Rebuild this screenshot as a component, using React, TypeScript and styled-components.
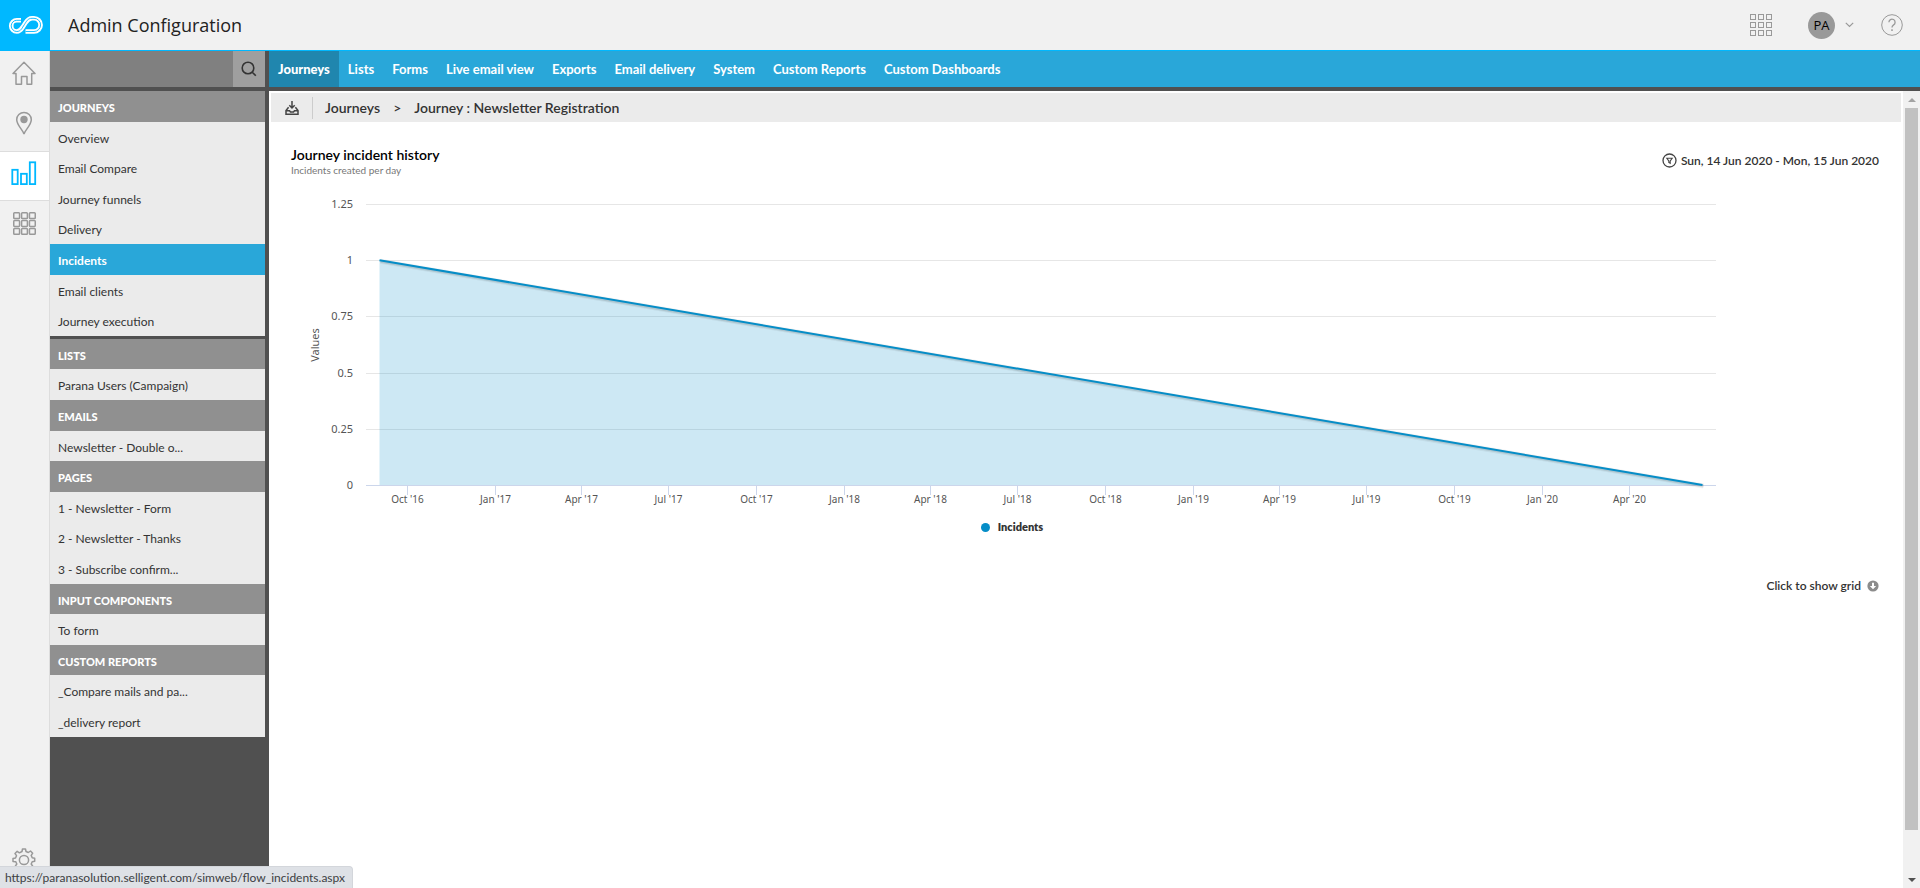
import React, { useLayoutEffect, useRef, useState } from "react";
import styled, { createGlobalStyle, css } from "styled-components";

const GlobalStyle = createGlobalStyle`
  *, *::before, *::after { box-sizing: border-box; }
  body {
    margin: 0;
    background: #fff;
    color: #333;
    font-family: Lato, Carlito, Calibri, sans-serif;
    font-size: 13px;
  }
  button, input { font: inherit; color: inherit; }
  button { border: 0; padding: 0; background: none; cursor: pointer; }
  a { color: inherit; text-decoration: none; }
  ul, ol { list-style: none; margin: 0; padding: 0; }
  h1, h2, h3, p { margin: 0; font-weight: inherit; font-size: inherit; }
  svg { display: block; }
`;

const Page = styled.div`
  display: flex;
  flex-direction: column;
  height: 100vh;
  overflow: hidden;
`;

const Header = styled.header`
  display: flex;
  flex: none;
  align-items: stretch;
  height: 51px;
  background: #f1f1f1;
`;

const LogoLink = styled.a`
  flex: none;
  width: 50px;
  background: #00b8ff;
`;

const HeaderMain = styled.div`
  display: flex;
  flex: 1;
  align-items: center;
  padding: 0 17px 0 18px;
  border-bottom: 1px solid #00b8ff;
`;

const AppTitle = styled.h1`
  flex: 1;
  font-family: "Open Sans", sans-serif;
  font-size: 18px;
  line-height: 24px;
  color: #222;
`;

const HeaderTools = styled.div`
  display: flex;
  align-items: center;
`;

const ToolButton = styled.button`
  display: flex;
  align-items: center;
  color: #999;
`;

const AccountButton = styled.button`
  display: flex;
  align-items: center;
  gap: 10px;
  margin: 0 27px 0 36px;
`;

const Avatar = styled.span`
  width: 27px;
  height: 27px;
  border-radius: 50%;
  background: #999;
  color: #000;
  font-family: "Open Sans", sans-serif;
  font-size: 13px;
  line-height: 27px;
  text-align: center;
`;

const Body = styled.div`
  display: flex;
  flex: 1;
  min-height: 0;
`;

const Rail = styled.nav`
  display: flex;
  flex: none;
  flex-direction: column;
  width: 50px;
  background: #f1f1f1;
  border-right: 1px solid #ddd;
`;

const RailLink = styled.a<{ $active?: boolean; $last?: boolean }>`
  display: flex;
  align-items: center;
  justify-content: center;
  height: 50px;
  padding: 0 1px 6px 0;
  color: #999;
  ${(p) =>
    p.$active &&
    css`
      color: #00b8ff;
      background: #fff;
      border: 1px solid #ddd;
      border-width: 1px 0;
    `}
  ${(p) => p.$last && "margin-top: auto;"}
`;

const Sidebar = styled.aside`
  flex: none;
  width: 219px;
  background: #505050;
  border-right: 4px solid #505050;
`;

const SearchForm = styled.form`
  display: flex;
  height: 36px;
  margin-bottom: 4px;
`;

const SearchInput = styled.input`
  flex: 1;
  min-width: 0;
  border: 0;
  padding: 0 8px;
  background: #808080;
  color: #fff;
  outline: 0;
`;

const SearchButton = styled.button`
  display: flex;
  align-items: center;
  justify-content: center;
  width: 32px;
  background: #9f9f9f;
  color: #333;
`;

const rowBox = css`
  padding: 9px 8px 6px;
  white-space: nowrap;
`;

const SectionTitle = styled.h2`
  ${rowBox}
  font-size: 11px;
  line-height: 1.42;
  font-weight: 900;
  color: #fff;
  background: #909090;
`;

const SectionBlock = styled.section<{ $divided?: boolean }>`
  border-bottom: ${(p) => (p.$divided ? "3px solid #505050" : "0")};
`;

const SideLink = styled.a<{ $active?: boolean }>`
  ${rowBox}
  display: block;
  font-size: 12px;
  line-height: 1.3;
  background: ${(p) => (p.$active ? "#29a7d9" : "#ebebeb")};
  color: ${(p) => (p.$active ? "#fff" : "#333")};
  font-weight: ${(p) => (p.$active ? 700 : 400)};
`;

const Main = styled.main`
  display: flex;
  flex: 1;
  flex-direction: column;
  min-width: 0;
`;

const Tabs = styled.nav`
  display: flex;
  flex: none;
  height: 40px;
  background: #29a7d9;
  border-bottom: 4px solid #505050;
`;

const Tab = styled.a<{ $active?: boolean }>`
  padding: 0 9px;
  font-size: 13px;
  line-height: 37px;
  font-weight: ${(p) => (p.$active ? 900 : 700)};
  color: #fff;
  background: ${(p) => (p.$active ? "#2086ae" : "transparent")};
`;

const Scroller = styled.div`
  display: flex;
  flex: 1;
  min-height: 0;
`;

const Content = styled.div`
  flex: 1;
  min-width: 0;
  padding: 2px;
`;

const Breadcrumb = styled.div`
  display: flex;
  align-items: center;
  height: 29px;
  background: #ebebeb;
  font-size: 14px;
  line-height: 20px;
  font-weight: 600;
`;

const ExportButton = styled.button`
  display: flex;
  align-items: center;
  height: 22px;
  padding: 0 13px 0 14px;
  border-right: 1px solid #ccc;
`;

const Trail = styled.ol`
  display: flex;
  gap: 13px;
  padding-left: 12px;
`;

const Report = styled.section`
  padding: 23px 22px 22px 20px;
`;

const ReportHead = styled.div`
  display: flex;
  align-items: center;
  justify-content: space-between;
`;

const ReportTitle = styled.h2`
  font-size: 14px;
  line-height: 19px;
  font-weight: 600;
  color: #000;
`;

const ReportSubtitle = styled.p`
  font-size: 10px;
  line-height: 12px;
  color: #777;
`;

const PeriodButton = styled.button`
  display: flex;
  align-items: center;
  gap: 4px;
  font-size: 12px;
  font-weight: 600;
  line-height: 16px;
`;

const ChartFigure = styled.figure`
  margin: 18px 146px 0 0;
`;

const ChartCanvas = styled.div`
  height: 325px;
`;

const AxisText = styled.text<{ $large?: boolean }>`
  font-family: "Noto Sans", "Lucida Grande", sans-serif;
  font-size: ${(p) => (p.$large ? 11 : 10)}px;
  fill: #555;
`;

const Legend = styled.button`
  display: flex;
  align-items: center;
  gap: 8px;
  margin: 0 auto;
  font-size: 11px;
  line-height: 16px;
  font-weight: 800;
`;

const LegendDot = styled.span`
  width: 9px;
  height: 9px;
  border-radius: 50%;
  background: #058dc7;
`;

const GridToggle = styled.button`
  display: flex;
  align-items: center;
  gap: 6px;
  margin: 43px 0 0 auto;
  font-size: 12px;
  line-height: 16px;
  font-weight: 600;
`;

const ScrollTrack = styled.div`
  display: flex;
  flex: none;
  flex-direction: column;
  align-items: center;
  width: 17px;
  background: #f1f1f1;
`;

const ScrollArrow = styled.button`
  display: flex;
  flex: none;
  align-items: center;
  justify-content: center;
  width: 17px;
  height: 17px;
`;

const ScrollThumb = styled.div`
  flex: 722;
  width: 13px;
  background: #c1c1c1;
`;

const ScrollRest = styled.div`
  flex: 41;
`;

const StatusBubble = styled.div`
  position: fixed;
  left: 0;
  bottom: 0;
  height: 22px;
  padding: 0 7px 0 5px;
  border: 1px solid #d3d6db;
  border-width: 1px 1px 0 0;
  border-radius: 0 4px 0 0;
  background: #dee1e6;
  color: #3c4043;
  font-size: 12px;
  line-height: 21px;
`;

const ribbon = "M21 20.300H16.800a5.600 5.600 0 0 0 0 11.200C21 31.500 22 28 24.300 24.700S27.500 18.300 32 18.300H34a6.600 6.600 0 0 1 0 13.200H25.500";

const LogoIcon = () => (
  <svg width="50" height="51" viewBox="0 0 50 51" fill="none" aria-hidden="true">
    <path d={ribbon} stroke="#fff" strokeWidth="4.600" />
    <path d={ribbon} stroke="#00b8ff" strokeWidth="0.900" />
  </svg>
);

const HomeIcon = () => (
  <svg width="24" height="24" viewBox="0 0 24 24" fill="none" stroke="currentColor" strokeWidth="1.500" aria-hidden="true">
    <path d="M1 12.500 12 1.200l11 11.300H19.700V23.200H15V15.500H9.500V23.200H4V12.500Z" strokeLinejoin="round" />
  </svg>
);

const PinIcon = () => (
  <svg width="18" height="24" viewBox="0 0 18 24" fill="none" stroke="currentColor" strokeWidth="1.500" aria-hidden="true">
    <path d="M9 23C8 19 1.700 14 1.700 8.700a7.300 7.300 0 0 1 14.600 0C16.300 14 10 19 9 23Z" />
    <circle cx="9" cy="8.500" r="3.700" fill="currentColor" stroke="none" />
  </svg>
);

const BarsIcon = () => (
  <svg width="26" height="24" viewBox="0 0 26 24" fill="none" stroke="currentColor" strokeWidth="1.800" aria-hidden="true">
    <rect x="1.300" y="8.800" width="5.400" height="14.300" />
    <rect x="10" y="12.800" width="5.800" height="10.300" />
    <rect x="18.800" y="1.300" width="5.400" height="21.800" />
  </svg>
);

const GridIcon = ({ size, weight, cell }: { size: number; weight: number; cell: number }) => {
  const step = (size - cell - weight) / 2;
  return (
    <svg width={size} height={size} viewBox={`0 0 ${size} ${size}`} fill="none" stroke="currentColor" strokeWidth={weight} aria-hidden="true">
      {[0, 1, 2].map((r) =>
        [0, 1, 2].map((c) => (
          <rect key={`${r}${c}`} x={weight / 2 + c * step} y={weight / 2 + r * step} width={cell} height={cell} rx={weight > 1 ? 0.8 : 0} />
        ))
      )}
    </svg>
  );
};

const GearIcon = () => (
  <svg width="24" height="24" viewBox="0 0 24 24" fill="none" stroke="currentColor" strokeWidth="1.500" strokeLinejoin="round" aria-hidden="true">
    <circle cx="12" cy="12" r="4.600" />
    <path d="M10 3.500 10.500 1h3l.5 2.500 2.300 1 2.200-1.500 2.200 2.200-1.500 2.200 1 2.300 2.500.5v3l-2.500.5-1 2.300 1.500 2.200-2.200 2.200-2.200-1.500-2.300 1-.5 2.500h-3l-.5-2.500-2.300-1-2.200 1.500-2.200-2.200 1.500-2.200-1-2.300L1 13.500v-3l2.500-.5 1-2.300-1.500-2.200 2.200-2.200 2.200 1.500Z" />
  </svg>
);

const SearchIcon = () => (
  <svg width="16" height="16" viewBox="0 0 16 16" fill="none" stroke="currentColor" strokeWidth="1.600" aria-hidden="true">
    <circle cx="7" cy="7" r="5.800" />
    <path d="m11.200 11.200 3.600 3.600" />
  </svg>
);

const ChevronIcon = () => (
  <svg width="9" height="6" viewBox="0 0 9 6" fill="none" stroke="#999" strokeWidth="1.200" aria-hidden="true">
    <path d="m.8.800 3.700 3.700L8.200.800" />
  </svg>
);

const HelpIcon = () => (
  <svg width="22" height="22" viewBox="0 0 22 22" fill="none" stroke="currentColor" aria-hidden="true">
    <circle cx="11" cy="11" r="10.300" />
    <path d="M7.900 8.300a3.100 3.100 0 1 1 4.700 2.600c-1 .7-1.600 1.200-1.600 2.700" strokeWidth="1.300" />
    <path d="M11 15.300v1.700" strokeWidth="1.500" />
  </svg>
);

const DownloadTrayIcon = () => (
  <svg width="14" height="14" viewBox="0 0 14 14" fill="none" stroke="#444" strokeWidth="1.500" aria-hidden="true">
    <path d="M7 0v7M4.300 4.300 7 7l2.700-2.700" />
    <path d="M3.600 6.200 1 9.500v3.700h12V9.500l-2.600-3.300" />
    <path d="M1 9.700h3.500l1 1.300h3l1-1.300H13" />
  </svg>
);

const FilterIcon = () => (
  <svg width="15" height="15" viewBox="0 0 15 15" fill="none" stroke="#444" strokeWidth="1.300" aria-hidden="true">
    <circle cx="7.500" cy="7.500" r="6.500" />
    <path d="M4.800 5.200h5.400L8.200 8v2.300l-1.400-.8V8Z" strokeWidth="1.100" />
  </svg>
);

const ShowGridIcon = () => (
  <svg width="12" height="12" viewBox="0 0 12 12" aria-hidden="true">
    <circle cx="6" cy="6" r="5.600" fill="#8c8c8c" />
    <path d="M5 2.800h2v3.200h2.200L6 9.300 2.800 6H5Z" fill="#fff" />
  </svg>
);

const day = 86400000;
const firstPoint = Date.UTC(2016, 8, 2);
const lastPoint = Date.UTC(2020, 5, 16, 12);
const axisTicks = ["Oct '16", "Jan '17", "Apr '17", "Jul '17", "Oct '17", "Jan '18", "Apr '18", "Jul '18", "Oct '18", "Jan '19", "Apr '19", "Jul '19", "Oct '19", "Jan '20", "Apr '20"];

function IncidentChart() {
  const host = useRef<HTMLDivElement>(null);
  const [width, setWidth] = useState(1400);

  useLayoutEffect(() => {
    const node = host.current;
    if (!node) return;
    const measure = () => setWidth(node.clientWidth);
    measure();
    const observer = new ResizeObserver(measure);
    observer.observe(node);
    return () => observer.disconnect();
  }, []);

  const left = 75;
  const right = width - 17;
  const top = 10;
  const bottom = 291;
  const pad = (right - left) * 0.01;
  const x = (t: number) =>
    left + pad + ((t - firstPoint) / (lastPoint - firstPoint)) * (right - left - 2 * pad);
  const y = (v: number) => bottom - ((bottom - top) * v) / 1.25;
  const trend = `M${x(firstPoint)} ${y(1)}L${x(lastPoint)} ${bottom}`;

  return (
    <ChartCanvas ref={host}>
      <svg width={width} height="320" role="img" aria-label="Incidents created per day">
        {[0.25, 0.5, 0.75, 1, 1.25].map((v) => (
          <line key={v} x1={left} x2={right} y1={Math.round(y(v)) + 0.5} y2={Math.round(y(v)) + 0.5} stroke="#e6e6e6" />
        ))}
        <line x1={left} x2={right} y1={bottom + 0.5} y2={bottom + 0.5} stroke="#ccd6eb" />
        <path d={`${trend}H${x(firstPoint)}Z`} fill="#058dc7" fillOpacity="0.2" />
        <g fill="none" stroke="#000" transform="translate(1 1)">
          <path d={trend} strokeOpacity="0.05" strokeWidth="5" />
          <path d={trend} strokeOpacity="0.1" strokeWidth="3" />
        </g>
        <path d={trend} fill="none" stroke="#058dc7" strokeWidth="2" />
        {[0, 0.25, 0.5, 0.75, 1, 1.25].map((v) => (
          <AxisText key={v} $large x={left - 13} y={Math.round(y(v)) + 4} textAnchor="end">
            {v}
          </AxisText>
        ))}
        {axisTicks.map((label, i) => {
          const tx = Math.floor(x(Date.UTC(2016, 9 + i * 3, 1) + day / 2)) + 0.5;
          return (
            <g key={label}>
              <line x1={tx} x2={tx} y1={bottom} y2={bottom + 10} stroke="#ccd6eb" />
              <AxisText x={tx} y={bottom + 18} textAnchor="middle">
                {label}
              </AxisText>
            </g>
          );
        })}
        <AxisText $large transform="translate(28 151) rotate(-90)" textAnchor="middle">
          Values
        </AxisText>
      </svg>
    </ChartCanvas>
  );
}

const sections = [
  {
    title: "JOURNEYS",
    divided: true,
    links: ["Overview", "Email Compare", "Journey funnels", "Delivery", "Incidents", "Email clients", "Journey execution"],
  },
  { title: "LISTS", links: ["Parana Users (Campaign)"] },
  { title: "EMAILS", links: ["Newsletter - Double o..."] },
  { title: "PAGES", links: ["1 - Newsletter - Form", "2 - Newsletter - Thanks", "3 - Subscribe confirm..."] },
  { title: "INPUT COMPONENTS", links: ["To form"] },
  { title: "CUSTOM REPORTS", links: ["_Compare mails and pa...", "_delivery report"] },
];

const tabs = ["Journeys", "Lists", "Forms", "Live email view", "Exports", "Email delivery", "System", "Custom Reports", "Custom Dashboards"];

export default function App() {
  return (
    <Page>
      <GlobalStyle />
      <Header>
        <LogoLink href="#" aria-label="Start page">
          <LogoIcon />
        </LogoLink>
        <HeaderMain>
          <AppTitle>Admin Configuration</AppTitle>
          <HeaderTools>
            <ToolButton aria-label="Applications">
              <GridIcon size={22} weight={1} cell={5} />
            </ToolButton>
            <AccountButton aria-label="Account">
              <Avatar>PA</Avatar>
              <ChevronIcon />
            </AccountButton>
            <ToolButton aria-label="Help">
              <HelpIcon />
            </ToolButton>
          </HeaderTools>
        </HeaderMain>
      </Header>
      <Body>
        <Rail>
          <RailLink href="#" aria-label="Home">
            <HomeIcon />
          </RailLink>
          <RailLink href="#" aria-label="Journeys map">
            <PinIcon />
          </RailLink>
          <RailLink href="#" aria-label="Reporting" $active>
            <BarsIcon />
          </RailLink>
          <RailLink href="#" aria-label="Modules">
            <GridIcon size={23} weight={1.5} cell={5.8} />
          </RailLink>
          <RailLink href="#" aria-label="Settings" $last>
            <GearIcon />
          </RailLink>
        </Rail>
        <Sidebar>
          <SearchForm>
            <SearchInput aria-label="Search" />
            <SearchButton type="button" aria-label="Run search">
              <SearchIcon />
            </SearchButton>
          </SearchForm>
          {sections.map((s) => (
            <SectionBlock key={s.title} $divided={s.divided}>
              <SectionTitle>{s.title}</SectionTitle>
              <ul>
                {s.links.map((l) => (
                  <li key={l}>
                    <SideLink href="#" $active={l === "Incidents"}>
                      {l}
                    </SideLink>
                  </li>
                ))}
              </ul>
            </SectionBlock>
          ))}
        </Sidebar>
        <Main>
          <Tabs>
            {tabs.map((t, i) => (
              <Tab key={t} href="#" $active={i === 0}>
                {t}
              </Tab>
            ))}
          </Tabs>
          <Scroller>
            <Content>
              <Breadcrumb>
                <ExportButton aria-label="Export">
                  <DownloadTrayIcon />
                </ExportButton>
                <Trail>
                  <li>
                    <a href="#">Journeys</a>
                  </li>
                  <li aria-hidden="true">&gt;</li>
                  <li>Journey : Newsletter Registration</li>
                </Trail>
              </Breadcrumb>
              <Report>
                <ReportHead>
                  <div>
                    <ReportTitle>Journey incident history</ReportTitle>
                    <ReportSubtitle>Incidents created per day</ReportSubtitle>
                  </div>
                  <PeriodButton>
                    <FilterIcon />
                    Sun, 14 Jun 2020 - Mon, 15 Jun 2020
                  </PeriodButton>
                </ReportHead>
                <ChartFigure>
                  <IncidentChart />
                  <Legend>
                    <LegendDot />
                    Incidents
                  </Legend>
                </ChartFigure>
                <GridToggle>
                  Click to show grid
                  <ShowGridIcon />
                </GridToggle>
              </Report>
            </Content>
            <ScrollTrack>
              <ScrollArrow aria-label="Scroll up">
                <svg width="8" height="4" viewBox="0 0 8 4" aria-hidden="true">
                  <path d="M0 4 4 0l4 4Z" fill="#a3a3a3" />
                </svg>
              </ScrollArrow>
              <ScrollThumb />
              <ScrollRest />
              <ScrollArrow aria-label="Scroll down">
                <svg width="8" height="4" viewBox="0 0 8 4" aria-hidden="true">
                  <path d="M0 0h8L4 4Z" fill="#505050" />
                </svg>
              </ScrollArrow>
            </ScrollTrack>
          </Scroller>
        </Main>
      </Body>
      <StatusBubble>https://paranasolution.selligent.com/simweb/flow_incidents.aspx</StatusBubble>
    </Page>
  );
}
